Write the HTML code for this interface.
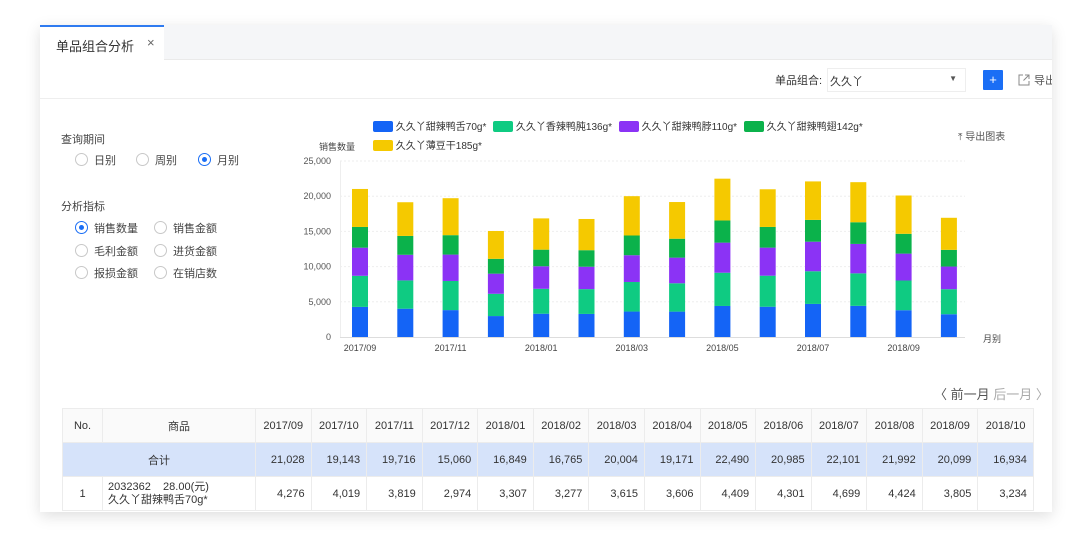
<!DOCTYPE html>
<html><head><meta charset="utf-8"><style>
*{margin:0;padding:0;box-sizing:border-box}
body{width:1080px;height:550px;background:#fff;font-family:"Liberation Sans","Noto Sans CJK SC",sans-serif;color:#333;position:relative;overflow:hidden}
.card{position:absolute;left:40px;top:25px;width:1012px;height:487px;background:#fff;box-shadow:0 4px 14px rgba(0,0,0,.13);overflow:hidden}
.abs{position:absolute;white-space:nowrap}
.radio{display:inline-block;width:13px;height:13px;border:1px solid #c8c8c8;border-radius:50%;vertical-align:-2px;margin-right:6px;background:#fff;position:relative}
.radio.on{border-color:#1a6ef5}
.radio.on:after{content:"";position:absolute;left:3px;top:3px;width:5px;height:5px;border-radius:50%;background:#1a6ef5}
.f11{font-size:11px;color:#444}
table{position:absolute;left:22px;top:383px;border-collapse:collapse;font-size:11px;color:#333;table-layout:fixed;width:971px}
td{border:1px solid #ececec;height:34px;text-align:right;padding-right:6px;overflow:hidden;white-space:nowrap}
tr.h td{background:#fafafa;text-align:center;padding:0}
tr.t td{background:#d6e3fa}
</style></head><body>
<div class="card">
 <div class="abs" style="left:0;top:0;width:1012px;height:35px;background:#f5f6f8;border-bottom:1px solid #eaeaea"></div>
 <div class="abs" style="left:0;top:0;width:124px;height:36px;background:#fff;border-top:2px solid #2f7bf0"></div>
 <div class="abs" style="left:16px;top:11px;font-size:13px;color:#333">单品组合分析</div>
 <div class="abs" style="left:107px;top:10px;font-size:13px;color:#666">×</div>
 <div class="abs" style="left:0;top:73px;width:1012px;height:1px;background:#eee"></div>
 <div class="abs" style="left:735px;top:47px;font-size:11px;color:#333">单品组合:</div>
 <div class="abs" style="left:787px;top:43px;width:139px;height:24px;border:1px solid #eee;font-size:11px;padding:4px 0 0 2px">久久丫<span style="position:absolute;right:8px;top:5px;font-size:8px;color:#555">▼</span></div>
 <div class="abs" style="left:943px;top:45px;width:20px;height:20px;background:#1a6ef5;color:#fff;font-size:13px;text-align:center;line-height:20px;border-radius:1px">+</div>
 <svg class="abs" style="left:978px;top:49px" width="12" height="12" viewBox="0 0 12 12"><path d="M5 1H1v10h10V7M7 1h4v4M11 1L5.5 6.5" fill="none" stroke="#888" stroke-width="1"/></svg>
 <div class="abs" style="left:994px;top:47px;font-size:11px;color:#555">导出</div>

 <div class="abs f11" style="left:21px;top:106px">查询期间</div>
 <div class="abs f11" style="left:35px;top:127px"><span class="radio"></span>日别</div>
 <div class="abs f11" style="left:96px;top:127px"><span class="radio"></span>周别</div>
 <div class="abs f11" style="left:158px;top:127px"><span class="radio on"></span>月别</div>
 <div class="abs f11" style="left:21px;top:173px">分析指标</div>
 <div class="abs f11" style="left:35px;top:195px"><span class="radio on"></span>销售数量</div>
 <div class="abs f11" style="left:114px;top:195px"><span class="radio"></span>销售金额</div>
 <div class="abs f11" style="left:35px;top:218px"><span class="radio"></span>毛利金额</div>
 <div class="abs f11" style="left:114px;top:218px"><span class="radio"></span>进货金额</div>
 <div class="abs f11" style="left:35px;top:240px"><span class="radio"></span>报损金额</div>
 <div class="abs f11" style="left:114px;top:240px"><span class="radio"></span>在销店数</div>

 <div class="abs" style="left:918px;top:103px;font-size:10px;color:#555">⤒ 导出图表</div>
 <div class="abs" style="left:894px;top:359px;font-size:13px;color:#555">〈 前一月 <span style="color:#aaa">后一月 〉</span></div>

 <table>
 <colgroup><col style="width:40px"><col style="width:153px"><col span="14" style="width:55.57px"></colgroup>
 <tr class="h"><td>No.</td><td>商品</td><td>2017/09</td><td>2017/10</td><td>2017/11</td><td>2017/12</td><td>2018/01</td><td>2018/02</td><td>2018/03</td><td>2018/04</td><td>2018/05</td><td>2018/06</td><td>2018/07</td><td>2018/08</td><td>2018/09</td><td>2018/10</td></tr>
 <tr class="t"><td colspan="2" style="text-align:center;padding:0">合计</td><td>21,028</td><td>19,143</td><td>19,716</td><td>15,060</td><td>16,849</td><td>16,765</td><td>20,004</td><td>19,171</td><td>22,490</td><td>20,985</td><td>22,101</td><td>21,992</td><td>20,099</td><td>16,934</td></tr>
 <tr><td style="text-align:center;padding:0">1</td><td style="text-align:left;padding-left:5px;line-height:13px">2032362&nbsp;&nbsp;&nbsp;&nbsp;28.00(元)<br>久久丫甜辣鸭舌70g*</td><td>4,276</td><td>4,019</td><td>3,819</td><td>2,974</td><td>3,307</td><td>3,277</td><td>3,615</td><td>3,606</td><td>4,409</td><td>4,301</td><td>4,699</td><td>4,424</td><td>3,805</td><td>3,234</td></tr>
 </table>
</div>

<svg class="abs" style="left:0;top:0" width="1080" height="400" id="ch"></svg>
<div class="abs" style="left:373px;top:118px;font-size:10px;color:#333">
 <span style="display:inline-block;width:20px;height:11px;background:#1464f6;border-radius:2px;vertical-align:-2px"></span> 久久丫甜辣鸭舌70g*
 <span style="display:inline-block;width:20px;height:11px;background:#0fcb82;border-radius:2px;vertical-align:-2px;margin-left:4px"></span> 久久丫香辣鸭肫136g*
 <span style="display:inline-block;width:20px;height:11px;background:#8b33f5;border-radius:2px;vertical-align:-2px;margin-left:4px"></span> 久久丫甜辣鸭脖110g*
 <span style="display:inline-block;width:20px;height:11px;background:#0bb24b;border-radius:2px;vertical-align:-2px;margin-left:4px"></span> 久久丫甜辣鸭翅142g*
</div>
<div class="abs" style="left:373px;top:137px;font-size:10px;color:#333"><span style="display:inline-block;width:20px;height:11px;background:#f5c900;border-radius:2px;vertical-align:-2px"></span> 久久丫薄豆干185g*</div>
<div class="abs" style="left:319px;top:140px;font-size:9px;color:#444">销售数量</div>
<div class="abs" style="left:983px;top:332px;font-size:9px;color:#444">月别</div>
<script>
var T=[21028,19143,19716,15060,16849,16765,20004,19171,22490,20985,22101,21992,20099,16934];
var B=[4276,4019,3819,2974,3307,3277,3615,3606,4409,4301,4699,4424,3805,3234];
var k=176/25000,s='';
for(var i=0;i<=5;i++){var y=337-i*5000*k;s+='<text x="331" y="'+(y+3)+'" font-size="9" fill="#555" text-anchor="end" font-family="Liberation Sans">'+(i?(i*5)+',000':'0')+'</text>';
 if(i)s+='<line x1="340" x2="965" y1="'+y+'" y2="'+y+'" stroke="#eee" stroke-dasharray="2,2"/>';}
s+='<line x1="340" x2="965" y1="337.5" y2="337.5" stroke="#ddd"/><line x1="340.5" x2="340.5" y1="161" y2="337" stroke="#eee"/>';
var C=['#1464f6','#0fcb82','#8b33f5','#0bb24b','#f5c900'];
var L=['2017/09','2017/11','2018/01','2018/03','2018/05','2018/07','2018/09'];
for(var j=0;j<14;j++){var x=352+j*45.3,t=T[j],v=[B[j],t*0.21,t*0.19,t*0.14];v.push(t-v[0]-v[1]-v[2]-v[3]);var y=337;
 for(var c=0;c<5;c++){var h=v[c]*k;y-=h;s+='<rect x="'+x+'" y="'+y+'" width="16" height="'+h+'" fill="'+C[c]+'"/>';}
 if(j%2==0)s+='<text x="'+(x+8)+'" y="351" font-size="9" fill="#444" text-anchor="middle" font-family="Liberation Sans">'+L[j/2]+'</text>';}
document.getElementById('ch').innerHTML=s;
</script>
</body></html>
